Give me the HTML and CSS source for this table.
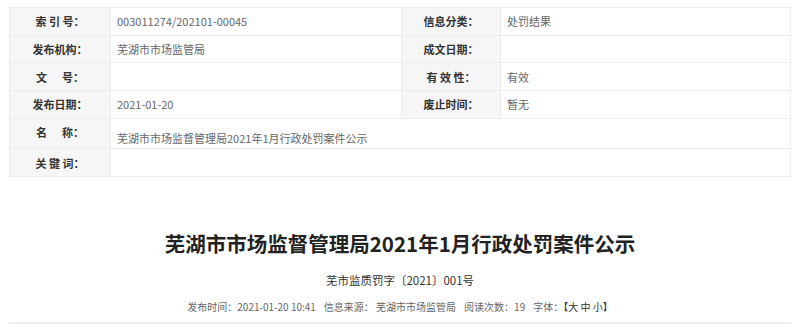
FILE: index.html
```html
<!DOCTYPE html>
<html lang="zh-CN">
<head>
<meta charset="utf-8">
<title>芜湖市市场监督管理局2021年1月行政处罚案件公示</title>
<link rel="stylesheet" href="styles.css">
</head>
<body>
<div class="page">
  <table class="info">
    <colgroup>
      <col class="c-label"><col class="c-value"><col class="c-label2"><col>
    </colgroup>
    <tr>
      <th>索&nbsp;引&nbsp;号：</th><td>003011274/202101-00045</td>
      <th>信息分类：</th><td>处罚结果</td>
    </tr>
    <tr>
      <th>发布机构：</th><td>芜湖市市场监管局</td>
      <th>成文日期：</th><td></td>
    </tr>
    <tr>
      <th>文&nbsp;&nbsp;&nbsp;&nbsp;&nbsp;&nbsp;号：</th><td></td>
      <th>有&nbsp;效&nbsp;性：</th><td>有效</td>
    </tr>
    <tr>
      <th>发布日期：</th><td>2021-01-20</td>
      <th>废止时间：</th><td>暂无</td>
    </tr>
    <tr class="tall">
      <th>名&nbsp;&nbsp;&nbsp;&nbsp;&nbsp;&nbsp;称：</th><td colspan="3" class="low">芜湖市市场监督管理局2021年1月行政处罚案件公示</td>
    </tr>
    <tr>
      <th>关&nbsp;键&nbsp;词：</th><td colspan="3"></td>
    </tr>
  </table>

  <div class="article">
    <h1 class="title">芜湖市市场监督管理局2021年1月行政处罚案件公示</h1>
    <p class="docno">芜市监质罚字〔2021〕001号</p>
    <p class="meta"><span>发布时间：2021-01-20 10:41</span><span>信息来源：&nbsp;芜湖市市场监管局</span><span>阅读次数：19</span><span>字体：<span class="size">【大 中 小】</span></span></p>
  </div>
</div>
</body>
</html>
```

FILE: styles.css
```css
html, body {
  margin: 0;
  padding: 0;
  background: #fff;
}
body {
  font-family: "Noto Sans CJK SC", "Noto Sans", sans-serif;
  color: #333;
}
.page {
  padding: 7px 9px 0 9px;
}
.info {
  width: 782px;
  border-collapse: collapse;
  table-layout: fixed;
  border: 1px solid #ececec;
  font-size: 11px;
}
.c-label { width: 101px; }
.c-value { width: 291px; }
.c-label2 { width: 99px; }
.info tr { height: 27.7px; }
.info tr.tall { height: 30.5px; }
.info th, .info td {
  border: 1px solid #ececec;
  padding: 0 6px;
  line-height: 16px;
}
.info th {
  background: #f6f6f6;
  font-weight: bold;
  color: #333;
  text-align: center;
}
.info td {
  color: #666;
  text-align: left;
  background: #fff;
}
.info td.low {
  padding-top: 9px;
}
.info tr.tall th {
  padding-bottom: 3px;
}
.article {
  text-align: center;
  padding-top: 51px;
}
.title {
  margin: 0;
  font-size: 20.5px;
  line-height: 30px;
  font-weight: bold;
  color: #222;
}
.docno {
  margin: 14px 0 0;
  font-size: 11.5px;
  line-height: 16px;
  color: #333;
}
.meta {
  display: flex;
  justify-content: center;
  gap: 8px;
  margin: 12px 0 0;
  font-size: 10px;
  line-height: 14px;
  color: #666;
  padding-bottom: 8px;
  border-bottom: 2px solid #eeeeee;
}
.meta .size {
  color: #333;
}
```
